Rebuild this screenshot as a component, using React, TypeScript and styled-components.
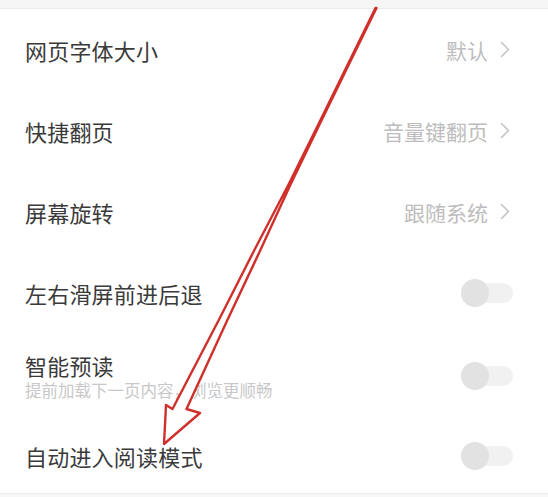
import React from "react";
import styled, { createGlobalStyle } from "styled-components";

const Global = createGlobalStyle`
  html, body { margin: 0; padding: 0; background: #ffffff; }
  body { font-family: "Noto Sans CJK SC", "Noto Sans", sans-serif; }
`;

const Screen = styled.div`
  position: relative;
  width: 548px;
  height: 497px;
  overflow: hidden;
  background: #f7f7f7;
  display: flex;
  flex-direction: column;
`;

const TopStrip = styled.div`
  height: 8px;
  background: #f6f6f6;
  border-bottom: 1px solid #ebebeb;
  flex: none;
`;

const List = styled.div`
  background: #ffffff;
  display: flex;
  flex-direction: column;
  border-bottom: 1px solid #ebebeb;
  flex: none;
`;

const Row = styled.div<{ $h: number }>`
  height: ${(p) => p.$h}px;
  box-sizing: border-box;
  padding: 0 36px 0 25px;
  display: flex;
  align-items: center;
  justify-content: space-between;
`;

const Texts = styled.div`
  display: flex;
  flex-direction: column;
  gap: 2px;
`;

const Title = styled.div`
  font-size: 22px;
  line-height: 26px;
  color: #3a3a3a;
  letter-spacing: 0.2px;
`;

const Sub = styled.div`
  font-size: 16.5px;
  line-height: 20px;
  color: #c8c8c8;
`;

const Value = styled.div`
  display: flex;
  align-items: center;
  gap: 12px;
  font-size: 21px;
  line-height: 26px;
  color: #bdbdbd;
  margin-right: 2px;
`;

const Toggle = styled.div`
  position: relative;
  width: 50px;
  height: 20px;
  border-radius: 10px;
  background: #f1f1f1;
  margin-right: -1px;
`;

const Knob = styled.div`
  position: absolute;
  left: -2px;
  top: -4px;
  width: 28px;
  height: 28px;
  border-radius: 50%;
  background: #e2e2e2;
`;

const Overlay = styled.svg`
  position: absolute;
  left: 0;
  top: 0;
  pointer-events: none;
`;

const Chevron = () => (
  <svg width="10" height="17" viewBox="0 0 10 17">
    <path d="M1.5 1.5 L8.5 8.5 L1.5 15.5" fill="none" stroke="#c4c4c4" strokeWidth="1.6" strokeLinecap="round" strokeLinejoin="round" />
  </svg>
);

type Item = {
  title: string;
  sub?: string;
  value?: string;
  toggle?: boolean;
  h: number;
};

const items: Item[] = [
  { title: "网页字体大小", value: "默认", h: 81 },
  { title: "快捷翻页", value: "音量键翻页", h: 81 },
  { title: "屏幕旋转", value: "跟随系统", h: 81 },
  { title: "左右滑屏前进后退", toggle: true, h: 81 },
  { title: "智能预读", sub: "提前加载下一页内容，浏览更顺畅", toggle: true, h: 86 },
  { title: "自动进入阅读模式", toggle: true, h: 74 },
];

// shaft centre line and half-width at sampled heights
const samples: [number, number][] = [
  [8, 0.5],
  [120, 0.6],
  [185, 1.0],
  [250, 3.0],
  [320, 4.3],
  [409, 7],
];
const centre = (y: number) => 376 - 0.49 * (y - 8);

const leftSide = samples.map(([y, w]) => [centre(y) - w, y]);
const rightSide = samples
  .slice()
  .reverse()
  .map(([y, w]) => [centre(y) + w, y]);
const head = [
  [166, 405],
  [164, 444],
  [200, 413],
];

const arrowPoints = [...leftSide, ...head, ...rightSide]
  .map((p) => p.map((v) => v.toFixed(1)).join(","))
  .join(" ");

export default function App() {
  return (
    <>
      <Global />
      <Screen>
        <TopStrip />
        <List>
          {items.map((it) => (
            <Row key={it.title} $h={it.h}>
              <Texts>
                <Title>{it.title}</Title>
                {it.sub && <Sub>{it.sub}</Sub>}
              </Texts>
              {it.value && (
                <Value>
                  {it.value}
                  <Chevron />
                </Value>
              )}
              {it.toggle && (
                <Toggle>
                  <Knob />
                </Toggle>
              )}
            </Row>
          ))}
        </List>
        <Overlay width="548" height="497" viewBox="0 0 548 497">
          <polygon
            points={arrowPoints}
            fill="#ffffff"
            fillOpacity="0.92"
            stroke="#d0302c"
            strokeWidth="2.4"
            strokeLinejoin="round"
          />
        </Overlay>
      </Screen>
    </>
  );
}
